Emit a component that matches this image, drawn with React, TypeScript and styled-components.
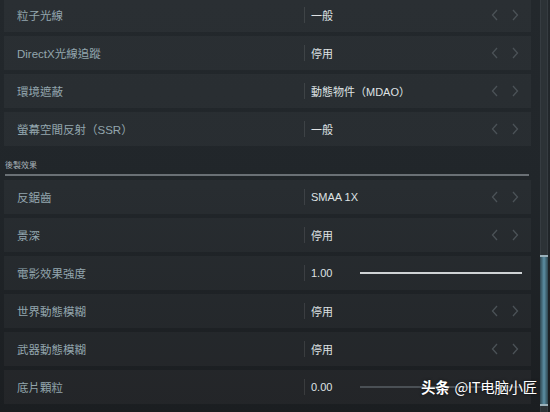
import React from "react";
import styled, { createGlobalStyle } from "styled-components";

const Global = createGlobalStyle`
  html, body { margin: 0; padding: 0; background: #1c2024; }
  body { font-family: "Liberation Sans", "Noto Sans CJK TC", sans-serif; overflow: hidden; }
`;

const Screen = styled.div`
  position: relative;
  width: 550px;
  height: 412px;
  overflow: hidden;
  display: flex;
  background: linear-gradient(180deg, #23282c 0%, #21262a 45%, #1b1e21 100%);
`;

const List = styled.div`
  width: 527px;
  margin-top: -2px;
  padding-left: 4px;
  display: flex;
  flex-direction: column;
  gap: 4px;
`;

const Row = styled.div`
  height: 34px;
  flex: 0 0 34px;
  display: grid;
  grid-template-columns: 300px 1fr;
  align-items: center;
  background: rgba(255, 255, 255, 0.035);
`;

const Label = styled.div`
  padding-left: 13px;
  font-size: 11.5px;
  color: #93a6ae;
`;

const ValueCell = styled.div`
  display: flex;
  align-items: center;
  height: 16px;
  border-left: 1px solid rgba(255, 255, 255, 0.1);
  padding-left: 6px;
  padding-right: 12px;
`;

const Value = styled.span<{ $wide?: boolean }>`
  font-size: 11px;
  color: #dfe2e4;
  flex: ${(p) => (p.$wide ? "0 0 48px" : "1")};
`;

const Arrows = styled.div`
  display: flex;
  gap: 12px;
  color: #4b5257;
  margin-left: auto;
`;

const Track = styled.div<{ $on: boolean }>`
  flex: 0 0 162px;
  height: 2px;
  margin-left: 1px;
  background: ${(p) => (p.$on ? "#cfd3d5" : "#4a5055")};
`;

const SectionHead = styled.div`
  height: 26px;
  flex: 0 0 26px;
  margin-left: 1px;
  margin-right: 2px;
  display: flex;
  align-items: flex-end;
  padding-bottom: 4px;
  box-sizing: border-box;
  border-bottom: 2px solid #6a7075;
  font-size: 8px;
  color: #a7b2b8;
`;

const ScrollBar = styled.div`
  position: relative;
  margin-left: 9px;
  width: 6px;
  height: 412px;
  background: #2c3236;
  border-left: 1px solid #363c41;
  border-right: 1px solid #363c41;
`;

const Thumb = styled.div`
  position: absolute;
  left: -1px;
  right: -1px;
  top: 255px;
  height: 151px;
  background: linear-gradient(90deg, #2e4650 0%, #5b8ea3 50%, #2e4650 100%);
  &::before,
  &::after {
    content: "";
    position: absolute;
    left: 0;
    right: 0;
    height: 2px;
    background: #9ab0ba;
  }
  &::before { top: 0; }
  &::after { bottom: 0; }
`;

const Watermark = styled.div`
  position: absolute;
  right: 13px;
  bottom: 15px;
  font-size: 14.5px;
  color: #ffffff;
  font-family: "Noto Sans CJK SC", sans-serif;
  text-shadow: 0 0 3px rgba(0, 0, 0, 0.7);
  letter-spacing: -0.3px;
`;

const Brand = styled.b`
  font-weight: 700;
  margin-right: 5px;
`;

const Chevron = ({ dir }: { dir: "l" | "r" }) => (
  <svg width="8" height="12" viewBox="0 0 8 12" fill="none">
    <path
      d={dir === "l" ? "M6 1L1.5 6L6 11" : "M2 1L6.5 6L2 11"}
      stroke="currentColor"
      strokeWidth="1.3"
    />
  </svg>
);

type Item =
  | { kind: "select"; label: string; value: string }
  | { kind: "slider"; label: string; value: string; on: boolean };

const graphics: Item[] = [
  { kind: "select", label: "粒子光線", value: "一般" },
  { kind: "select", label: "DirectX光線追蹤", value: "停用" },
  { kind: "select", label: "環境遮蔽", value: "動態物件（MDAO）" },
  { kind: "select", label: "螢幕空間反射（SSR）", value: "一般" },
];

const post: Item[] = [
  { kind: "select", label: "反鋸齒", value: "SMAA 1X" },
  { kind: "select", label: "景深", value: "停用" },
  { kind: "slider", label: "電影效果強度", value: "1.00", on: true },
  { kind: "select", label: "世界動態模糊", value: "停用" },
  { kind: "select", label: "武器動態模糊", value: "停用" },
  { kind: "slider", label: "底片顆粒", value: "0.00", on: false },
];

const SettingRow = ({ item }: { item: Item }) => (
  <Row>
    <Label>{item.label}</Label>
    <ValueCell>
      {item.kind === "select" ? (
        <>
          <Value>{item.value}</Value>
          <Arrows>
            <Chevron dir="l" />
            <Chevron dir="r" />
          </Arrows>
        </>
      ) : (
        <>
          <Value $wide>{item.value}</Value>
          <Track $on={item.on} />
        </>
      )}
    </ValueCell>
  </Row>
);

export default function App() {
  return (
    <Screen>
      <Global />
      <List>
        {graphics.map((it) => (
          <SettingRow key={it.label} item={it} />
        ))}
        <SectionHead>後製效果</SectionHead>
        {post.map((it) => (
          <SettingRow key={it.label} item={it} />
        ))}
      </List>
      <ScrollBar>
        <Thumb />
      </ScrollBar>
      <Watermark>
        <Brand>头条</Brand>@IT电脑小匠
      </Watermark>
    </Screen>
  );
}
